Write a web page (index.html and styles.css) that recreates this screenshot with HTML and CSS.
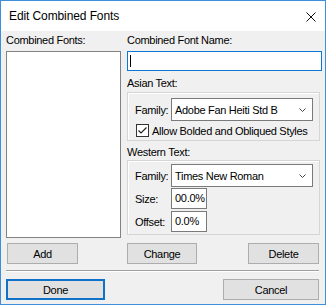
FILE: index.html
```html
<!DOCTYPE html>
<html lang="en">
<head>
    <meta charset="UTF-8">
    <title>Edit Combined Fonts</title>
    <link rel="stylesheet" href="styles.css">
</head>
<body>
    <div class="window">
        <div class="titlebar">
            <span class="title">Edit Combined Fonts</span>
            <svg class="close" width="10" height="10" viewBox="0 0 10 10">
                <path d="M0.5 0.5 L9.5 9.5 M9.5 0.5 L0.5 9.5" stroke="#111" stroke-width="1" fill="none"/>
            </svg>
        </div>
        <div class="dialog">
            <div class="main">
                <div class="left-col">
                    <div class="lbl">Combined Fonts:</div>
                    <div class="listbox"></div>
                </div>
                <div class="right-col">
                    <div class="lbl">Combined Font Name:</div>
                    <div class="textbox focused"><span class="caret"></span></div>

                    <div class="lbl asian-lbl">Asian Text:</div>
                    <div class="group asian">
                        <div class="row">
                            <span class="field-lbl">Family:</span>
                            <div class="combo">
                                <span>Adobe Fan Heiti Std B</span>
                                <svg class="chevron" width="7" height="4" viewBox="0 0 7 4">
                                    <polyline points="0.5,0.5 3.5,3.5 6.5,0.5" stroke="#444" stroke-width="1" fill="none"/>
                                </svg>
                            </div>
                        </div>
                        <div class="check-row">
                            <span class="checkbox">
                                <svg width="11" height="11" viewBox="0 0 11 11">
                                    <polyline points="1.5,5.5 4,8 9.5,2.5" stroke="#222" stroke-width="1.2" fill="none"/>
                                </svg>
                            </span>
                            <span>Allow Bolded and Obliqued Styles</span>
                        </div>
                    </div>

                    <div class="lbl western-lbl">Western Text:</div>
                    <div class="group western">
                        <div class="row">
                            <span class="field-lbl">Family:</span>
                            <div class="combo">
                                <span>Times New Roman</span>
                                <svg class="chevron" width="7" height="4" viewBox="0 0 7 4">
                                    <polyline points="0.5,0.5 3.5,3.5 6.5,0.5" stroke="#444" stroke-width="1" fill="none"/>
                                </svg>
                            </div>
                        </div>
                        <div class="row size-row">
                            <span class="field-lbl">Size:</span>
                            <div class="small-input">00.0%</div>
                        </div>
                        <div class="row offset-row">
                            <span class="field-lbl">Offset:</span>
                            <div class="small-input">0.0%</div>
                        </div>
                    </div>
                </div>
            </div>

            <div class="btn-row">
                <button class="btn add-btn">Add</button>
                <button class="btn change-btn">Change</button>
                <button class="btn delete-btn">Delete</button>
            </div>
            <div class="separator"></div>
            <div class="btn-row bottom-row">
                <button class="btn done-btn">Done</button>
                <button class="btn cancel-btn">Cancel</button>
            </div>
        </div>
    </div>
</body>
</html>
```

FILE: styles.css
```css
* {
    box-sizing: border-box;
}
body {
    margin: 0;
    font-family: "Liberation Sans", Arial, sans-serif;
}
.window {
    width: 326px;
    height: 305px;
    border: 1px solid #3d8fdc;
    display: flex;
    flex-direction: column;
    background-color: #f0f0f0;
}
.titlebar {
    height: 30px;
    background-color: #fff;
    display: flex;
    align-items: center;
    justify-content: space-between;
    padding: 0 9px 0 8px;
}
.title {
    font-size: 12px;
    line-height: 14px;
    letter-spacing: -0.1px;
    color: #000;
}
.close {
    display: block;
    margin-top: 1px;
}
.dialog {
    flex: 1;
    padding: 3px 3px 0 5px;
    font-size: 11px;
    letter-spacing: -0.3px;
    color: #000;
}
.main {
    display: flex;
    gap: 6px;
}
.lbl {
    height: 13px;
    line-height: 13px;
    white-space: nowrap;
}
.left-col {
    width: 115px;
}
.listbox {
    margin-top: 4px;
    height: 187px;
    background-color: #fff;
    border: 1px solid #828282;
}
.right-col {
    width: 195px;
}
.textbox {
    margin-top: 4px;
    height: 20px;
    background-color: #fff;
    border: 1px solid #7a7a7a;
    padding-left: 2px;
    display: flex;
    align-items: center;
}
.textbox.focused {
    border-color: #0a78d4;
}
.caret {
    width: 1px;
    height: 12px;
    background-color: #000;
}
.asian-lbl {
    margin-top: 6px;
}
.western-lbl {
    margin-top: 5px;
}
.group {
    width: 193px;
    border: 1px solid #d5d5d5;
    box-shadow: inset 1px 1px 0 #fff;
    padding-left: 7px;
}
.asian {
    margin-top: 2px;
    height: 49px;
    padding-top: 5px;
}
.western {
    margin-top: 1px;
    height: 75px;
    padding-top: 3px;
}
.row {
    display: flex;
    align-items: center;
}
.field-lbl {
    width: 36px;
    white-space: nowrap;
}
.combo {
    width: 142px;
    height: 23px;
    background-color: #fff;
    border: 1px solid #7a7a7a;
    padding: 0 6px 0 3px;
    display: flex;
    align-items: center;
    justify-content: space-between;
    white-space: nowrap;
}
.chevron {
    display: block;
}
.check-row {
    margin-top: 3px;
    height: 13px;
    display: flex;
    align-items: center;
    white-space: nowrap;
}
.checkbox {
    width: 13px;
    height: 13px;
    margin-left: 1px;
    margin-right: 3px;
    border: 1px solid #333;
    background-color: #fff;
    display: flex;
}
.size-row {
    margin-top: 1px;
}
.offset-row {
    margin-top: 2px;
}
.small-input {
    width: 36px;
    height: 21px;
    background-color: #fff;
    border: 1px solid #7a7a7a;
    padding-left: 3px;
    line-height: 19px;
    overflow: hidden;
    white-space: nowrap;
}
.btn-row {
    display: flex;
    margin-top: 5px;
}
.btn {
    height: 21px;
    padding: 0;
    background-color: #e1e1e1;
    border: 1px solid #adadad;
    font-family: "Liberation Sans", Arial, sans-serif;
    font-size: 11px;
    letter-spacing: -0.3px;
    color: #000;
}
.add-btn {
    margin-left: 1px;
    width: 71px;
}
.change-btn {
    margin-left: 49px;
    width: 70px;
}
.delete-btn {
    margin-left: 51px;
    width: 71px;
}
.separator {
    margin-top: 6px;
    width: 313px;
    height: 2px;
    border-top: 1px solid #a0a0a0;
    border-bottom: 1px solid #fff;
}
.bottom-row {
    margin-top: 7px;
}
.done-btn {
    width: 99px;
    border: 2px solid #0f72c8;
}
.cancel-btn {
    margin-left: 118px;
    width: 96px;
}
```
